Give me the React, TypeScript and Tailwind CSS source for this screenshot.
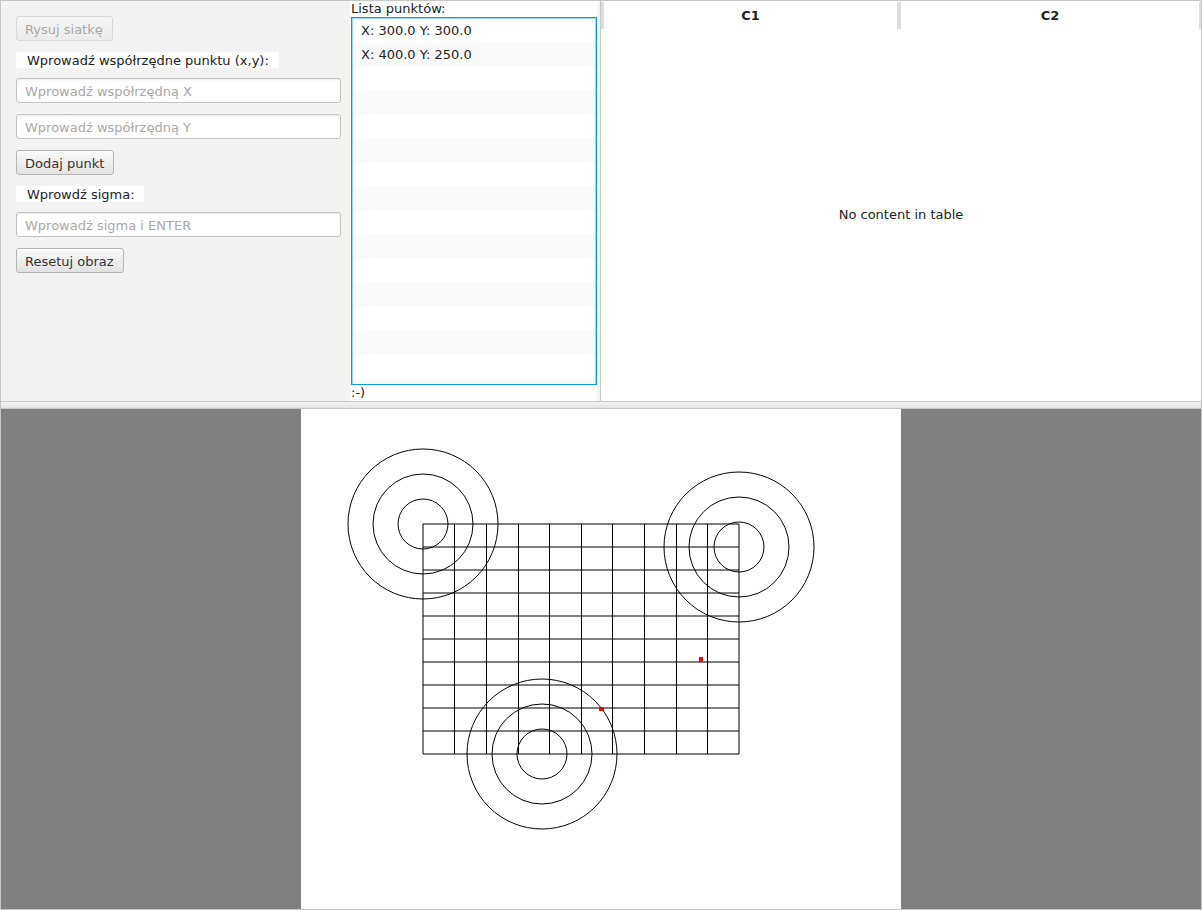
import React from "react";

const font = { fontFamily: '"DejaVu Sans", Verdana, sans-serif' };

function Btn({ children, disabled, w }: { children: React.ReactNode; disabled?: boolean; w: string }) {
  return (
    <div
      className={`${w} h-[25px] flex items-center pl-[8px] pt-[2px] rounded-[3px] border border-[#b5b5b5] bg-gradient-to-b from-[#fbfbfb] to-[#e2e2e2] text-[13px] text-[#333] shadow-[inset_0_1px_0_#ffffff] ${disabled ? "opacity-40" : ""}`}
    >
      {children}
    </div>
  );
}

function Field({ placeholder }: { placeholder: string }) {
  return (
    <div className="w-[325px] h-[25px] flex items-center pl-[8px] pt-[2px] rounded-[3px] border border-[#c3c3c3] bg-white shadow-[inset_0_1px_2px_#ececec] text-[13px] text-[#a9a9a9]">
      {placeholder}
    </div>
  );
}

function LabelBox({ children, w }: { children: React.ReactNode; w: string }) {
  return (
    <div className={`${w} h-[16px] bg-white flex items-center pl-[11px] text-[13px] text-[#222] leading-none`}>{children}</div>
  );
}

export default function App() {
  const rows = Array.from({ length: 16 });
  const items = ["X: 300.0 Y: 300.0", "X: 400.0 Y: 250.0"];
  const vx = [153, 185, 217, 248, 280, 311, 343, 375, 406];
  const hy = [115, 138, 161, 184, 207, 230, 253, 276, 299, 322, 345];
  return (
    <div className="w-[1202px] h-[910px] border border-[#c6c6c6] flex flex-col bg-[#f3f3f3] overflow-hidden" style={font}>
      {/* top */}
      <div className="h-[400px] flex shrink-0">
        <div className="w-[349px] shrink-0 pl-[15px] pt-[15px] flex flex-col">
          <Btn disabled w="w-[97px]">Rysuj siatkę</Btn>
          <div className="mt-[11px]">
            <LabelBox w="w-[263px]">Wprowadź współrzędne punktu (x,y):</LabelBox>
          </div>
          <div className="mt-[10px]">
            <Field placeholder="Wprowadź współrzędną X" />
          </div>
          <div className="mt-[11px]">
            <Field placeholder="Wprowadź współrzędną Y" />
          </div>
          <div className="mt-[11px]">
            <Btn w="w-[98px]">Dodaj punkt</Btn>
          </div>
          <div className="mt-[11px]">
            <LabelBox w="w-[128px]">Wprowdź sigma:</LabelBox>
          </div>
          <div className="mt-[10px]">
            <Field placeholder="Wprowadź sigma i ENTER" />
          </div>
          <div className="mt-[11px]">
            <Btn w="w-[108px]">Resetuj obraz</Btn>
          </div>
        </div>
        {/* middle */}
        <div className="w-[247px] shrink-0 bg-white flex flex-col">
          <div className="h-[16px] pl-[1px] text-[13px] leading-[16px] text-[#222]">Lista punktów:</div>
          <div className="ml-[1px] h-[368px] border border-[#0a9bd0] shadow-[inset_0_0_0_1px_#9dd8ef] overflow-hidden p-[1px]">
            {rows.map((_, i) => (
              <div
                key={i}
                className={`h-[24px] flex items-center pl-[8px] text-[13px] text-[#222] ${i % 2 === 1 ? "bg-[#f9f9f9]" : "bg-white"}`}
              >
                {items[i] ?? ""}
              </div>
            ))}
          </div>
          <div className="h-[16px] pl-[1px] text-[13px] leading-[16px] text-[#222]">:-)</div>
        </div>
        <div className="w-[3px] shrink-0" />
        {/* table */}
        <div className="flex-1 border-l border-[#c6c6c6] bg-white flex flex-col">
          <div className="h-[28px] flex shrink-0 pt-[1px]">
            <div className="w-[298px] flex items-center justify-center text-[13px] font-bold text-[#222] border-l-[3px] border-r-[2px] border-[#dedede] bg-white">
              C1
            </div>
            <div className="flex-1 flex items-center justify-center text-[13px] font-bold text-[#222] border-l-[2px] border-r-[2px] border-[#dedede] bg-white">
              C2
            </div>
          </div>
          <div className="flex-1 flex items-center justify-center text-[13px] text-[#222]">No content in table</div>
        </div>
      </div>
      {/* divider */}
      <div className="h-[8px] shrink-0 border-t border-b border-[#c6c6c6] bg-gradient-to-b from-[#f4f4f4] to-[#e3e3e3]" />
      {/* canvas area */}
      <div className="flex-1 bg-[#808080] flex justify-center">
        <div className="w-[600px] h-[500px] bg-white">
          <svg width="600" height="500" viewBox="0 0 600 500">
            {hy.map((y) => (
              <line key={"h" + y} x1={122} y1={y} x2={438} y2={y} stroke="#000" strokeWidth={1} />
            ))}
            <line x1={122} y1={115} x2={122} y2={345} stroke="#000" strokeWidth={1} />
            <line x1={438} y1={115} x2={438} y2={345} stroke="#000" strokeWidth={1} />
            {vx.map((x) => (
              <line key={"v" + x} x1={x + 0.5} y1={115} x2={x + 0.5} y2={345} stroke="#000" strokeWidth={1} />
            ))}
            {[25, 50, 75].map((r) => (
              <g key={r}>
                <circle cx={122} cy={115} r={r} fill="none" stroke="#000" strokeWidth={1} />
                <circle cx={438} cy={138} r={r} fill="none" stroke="#000" strokeWidth={1} />
                <circle cx={241} cy={345} r={r} fill="none" stroke="#000" strokeWidth={1} />
              </g>
            ))}
            <rect x={398} y={248} width={4} height={5} fill="#ff0000" />
            <rect x={298} y={298} width={5} height={4} fill="#ff0000" />
          </svg>
        </div>
      </div>
    </div>
  );
}
